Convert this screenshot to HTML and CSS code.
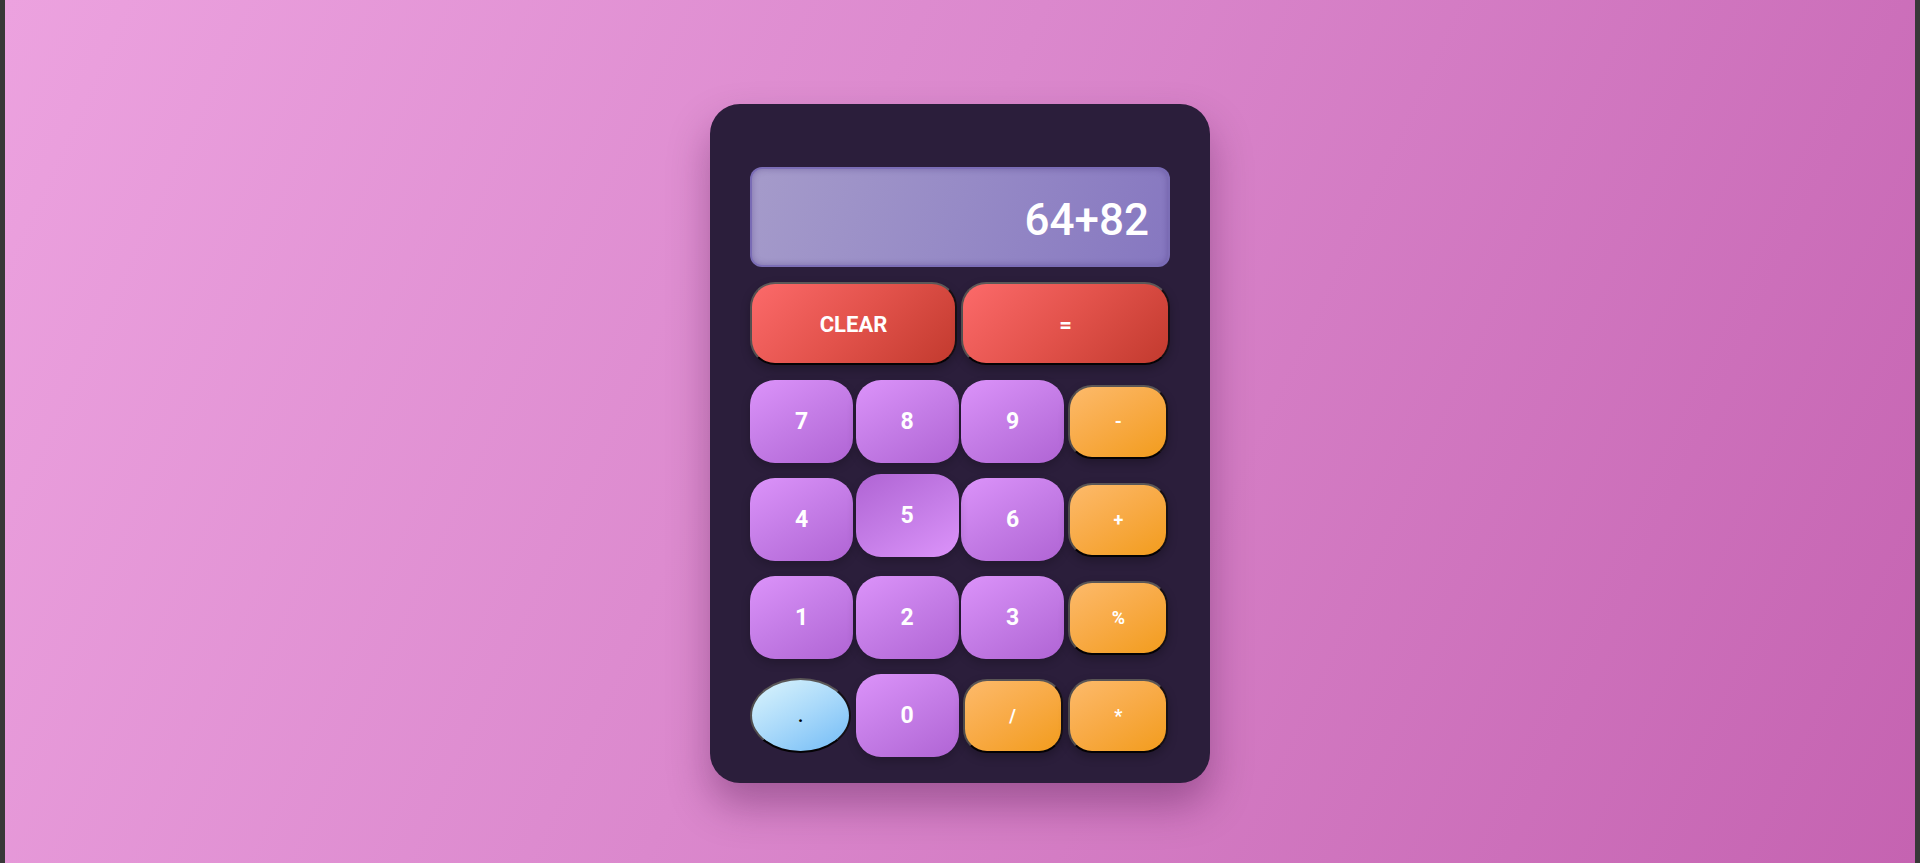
FILE: index.html
```html
<!DOCTYPE html>
<html lang="en">
<head>
<meta charset="utf-8">
<title>Calculator</title>
<link rel="stylesheet" href="styles.css">
</head>
<body>
<main class="page">
  <div class="calculator">
    <div class="display">64+82</div>
    <div class="keys">
      <button class="key key-action">CLEAR</button>
      <button class="key key-action">=</button>
      <button class="key key-digit">7</button>
      <button class="key key-digit">8</button>
      <button class="key key-digit">9</button>
      <button class="key key-op">-</button>
      <button class="key key-digit">4</button>
      <button class="key key-digit key-pressed">5</button>
      <button class="key key-digit">6</button>
      <button class="key key-op">+</button>
      <button class="key key-digit">1</button>
      <button class="key key-digit">2</button>
      <button class="key key-digit">3</button>
      <button class="key key-op">%</button>
      <button class="key key-dot">.</button>
      <button class="key key-digit">0</button>
      <button class="key key-op">/</button>
      <button class="key key-op">*</button>
    </div>
  </div>
</main>
</body>
</html>
```
FILE: styles.css
```css
* { box-sizing: border-box; }

html {
  margin: 0;
  background: #383838;
  height: 100%;
}

body {
  margin: 0 5px;
  height: 100%;
  background: linear-gradient(115deg, #eca2df 0%, #db88cd 45%, #c563b1 100%);
  font-family: Roboto, "Liberation Sans", sans-serif;
}

.page {
  height: 100%;
  display: flex;
  justify-content: center;
  align-items: flex-start;
  padding-top: 104px;
}

.calculator {
  width: 500px;
  background: #2b1e3b;
  border-radius: 30px;
  padding: 63px 40px 26px;
  box-shadow: 0 22px 40px rgba(60, 10, 60, 0.35);
}

.display {
  height: 100px;
  border-radius: 12px;
  border: 2px solid rgba(120, 105, 180, 0.9);
  background: linear-gradient(110deg, #a59bca 0%, #968ac6 50%, #8677c0 100%);
  box-shadow: inset 0 0 6px rgba(60, 40, 110, 0.35);
  color: #ffffff;
  font-family: Roboto, "Liberation Sans", sans-serif;
  font-weight: 500;
  font-size: 44px;
  display: flex;
  align-items: center;
  justify-content: flex-end;
  padding: 5px 19px 0 0;
  margin-bottom: 15px;
}

.keys {
  display: grid;
  grid-template-columns: repeat(4, 1fr);
  grid-auto-rows: 83px;
  column-gap: 2.5px;
  row-gap: 15px;
}

.key {
  font-family: Roboto, "Liberation Sans", sans-serif;
  font-weight: 700;
  font-size: 23px;
  color: #ffffff;
  border: none;
  padding: 0;
  cursor: pointer;
  display: flex;
  align-items: center;
  justify-content: center;
}

.key-action {
  grid-column: span 2;
  width: 207px;
  height: 83px;
  justify-self: start;
  border-radius: 25px;
  border: 2px solid;
  border-color: #5c5858 #161015 #050305 #545050;
  background: linear-gradient(135deg, #fc6a6a 0%, #e2524b 50%, #c23a2e 100%);
  box-shadow: 0 4px 10px rgba(0, 0, 0, 0.25);
  font-size: 22px;
  padding-top: 2px;
}

.key-action + .key-action {
  width: 209px;
  justify-self: end;
}

.key-digit {
  width: 103px;
  height: 83px;
  border-radius: 25px;
  background: linear-gradient(150deg, #dc93fa 0%, #c47ce6 50%, #b064d4 100%);
  box-shadow: 0 4px 10px rgba(0, 0, 0, 0.2);
}

.key-pressed {
  transform: translateY(-4px);
  background: linear-gradient(150deg, #b064d4 0%, #c47ce6 50%, #dc93fa 100%);
}

.key-op {
  width: 100px;
  height: 74px;
  justify-self: center;
  align-self: center;
  border-radius: 24px;
  border: 2px solid;
  border-color: #5a5656 #161015 #040204 #504c4c;
  background: linear-gradient(150deg, #fdba6b 0%, #f8aa45 50%, #f29c1d 100%);
  box-shadow: 0 4px 10px rgba(0, 0, 0, 0.25);
  font-size: 18px;
}

.key-dot {
  width: 101px;
  height: 75px;
  justify-self: start;
  align-self: center;
  border-radius: 50%;
  border: 2px solid;
  border-color: #5a5656 #161015 #040204 #504c4c;
  background: linear-gradient(150deg, #dcf5fc 0%, #a9d9fa 50%, #72bbf6 100%);
  color: #000000;
  font-size: 18px;
}
```
